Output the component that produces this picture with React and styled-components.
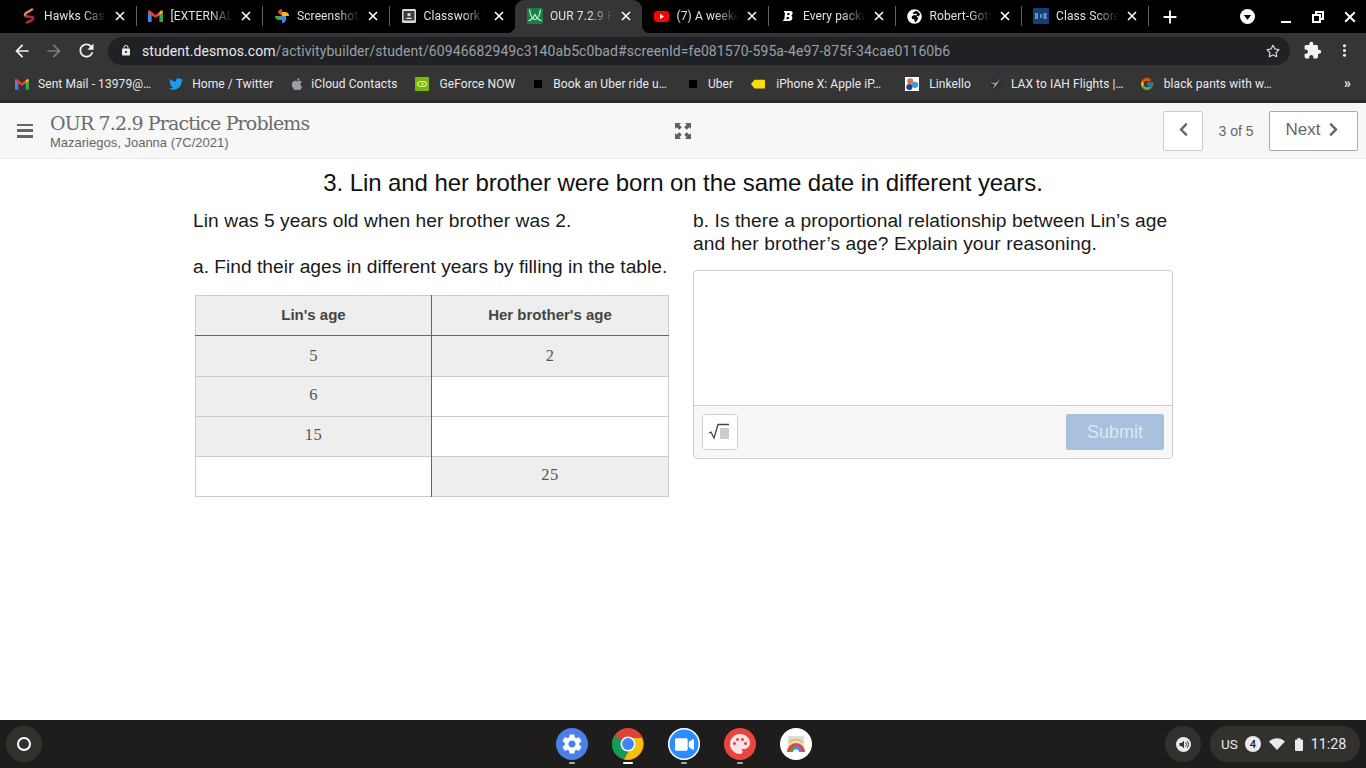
import React from 'react';
import styled, { createGlobalStyle } from 'styled-components';
import { FaApple, FaTwitter, FaChevronLeft, FaChevronRight, FaRegStar, FaVideo, FaGlobeAfrica } from 'react-icons/fa';
import { FcGoogle } from 'react-icons/fc';
import { MdSettings, MdPalette, MdArrowBack, MdArrowForward, MdRefresh, MdLock, MdAdd, MdMoreVert, MdExtension } from 'react-icons/md';

const Global = createGlobalStyle`
  html, body { margin: 0; padding: 0; background: #fff; }
  body { font-family: "Liberation Sans", Arial, sans-serif; }
  * { box-sizing: border-box; }
  #root { width: 1366px; height: 768px; overflow: hidden; }
`;

const Screen = styled.div`
  width: 1366px; height: 768px; display: flex; flex-direction: column; background: #fff; overflow: hidden;
`;

const TabStrip = styled.div`
  height: 33px; background: #000; display: flex; align-items: stretch; padding-left: 9px; font-family: Roboto, sans-serif; flex: none;
`;
const Tab = styled.div`
  width: 126.5px; flex: none; position: relative; display: flex; align-items: center; padding: 0 8px 1px 12px;
  background: ${p => (p.$active ? '#353535' : 'transparent')};
  border-radius: 9px 9px 0 0;
  ${p => p.$active && `
    &::before, &::after { content: ''; position: absolute; bottom: 0; width: 8px; height: 8px; }
    &::before { left: -8px; background: radial-gradient(circle at 0 0, #000 8px, #353535 8.5px); }
    &::after { right: -8px; background: radial-gradient(circle at 100% 0, #000 8px, #353535 8.5px); }
  `}
  ${p => p.$sep && `
    &::before { content: ''; position: absolute; left: 0; top: 6px; bottom: 7px; width: 1px; background: #5f6368; }
  `}
`;
const TabEnd = styled.span`
  width: 1px; flex: none; margin: 6px 0 7px; background: #5f6368;
`;
const TabIcon = styled.span`
  width: 16px; height: 16px; flex: none; display: flex; align-items: center; justify-content: center; margin-right: 7px;
`;
const TabTitle = styled.span`
  flex: 1; min-width: 0; overflow: hidden; white-space: nowrap; color: #dee1e6; font-size: 12px; letter-spacing: .1px;
  -webkit-mask-image: linear-gradient(to right, #000 62%, transparent 100%);
  mask-image: linear-gradient(to right, #000 62%, transparent 100%);
`;
const TabClose = styled.span`
  flex: none; width: 16px; display: flex; justify-content: center; color: #fff; margin-left: 5px;
`;
const NewTab = styled.span`
  width: 42px; flex: none; display: flex; align-items: center; justify-content: center; color: #fff;
`;
const WindowControls = styled.div`
  margin-left: auto; display: flex; align-items: center; color: #fff;
`;
const WinButton = styled.span`
  width: ${p => p.$w || 32}px; height: 33px; display: flex; align-items: center; justify-content: center;
`;

const Toolbar = styled.div`
  height: 35px; background: #353535; display: flex; align-items: center; flex: none; padding-left: 6px; color: #fff; font-family: Roboto, sans-serif;
`;
const NavButton = styled.span`
  width: 32px; height: 32px; flex: none; display: flex; align-items: center; justify-content: center;
  color: ${p => (p.$off ? '#7b7c7f' : '#f1f3f4')};
`;
const UrlBar = styled.div`
  margin-left: 6px; width: 1182px; height: 28px; border-radius: 14px; background: #202124; display: flex; align-items: center; padding: 0 10px 0 12px; flex: none;
`;
const LockIcon = styled.span`
  width: 12px; display: flex; justify-content: center; margin-right: 10px; color: #e8eaed;
`;
const UrlText = styled.span`
  font-size: 14px; color: #9aa0a6; white-space: nowrap; letter-spacing: .08px;
  b { font-weight: 400; color: #e8eaed; }
`;
const UrlStar = styled.span`
  margin-left: auto; display: flex; color: #dadce0;
`;
const ToolIcons = styled.div`
  display: flex; align-items: center; margin-left: 6px;
`;

const BookmarkBar = styled.div`
  height: 32px; background: #353535; display: flex; align-items: center; padding-left: 15px; flex: none; gap: 18px; font-family: Roboto, sans-serif; position: relative;
`;
const Bookmark = styled.span`
  display: flex; align-items: center; gap: ${p => p.$gap}px; margin-left: ${p => p.$ml}px; font-size: 12px; color: #e8eaed; white-space: nowrap; letter-spacing: .08px;
`;
const BmIcon = styled.span`
  width: 14px; height: 16px; display: flex; align-items: center; justify-content: center; flex: none;
`;
const More = styled.span`
  position: absolute; right: 16px; top: 7px; color: #e8eaed; font-size: 14px; font-weight: 700; letter-spacing: -1px;
`;
const Square = styled.span`
  width: 8px; height: 8px; background: #000; display: block;
`;
const DarkLine = styled.div`
  height: 3px; background: #2a2a2a; flex: none;
`;

const Header = styled.header`
  height: 56px; flex: none; background: #f7f7f7; border-bottom: 1px solid #e8e8e8; display: flex; align-items: center; padding: 0 8px 0 17px; position: relative;
`;
const Burger = styled.span`
  width: 16px; height: 14px; flex: none; display: flex; flex-direction: column; justify-content: space-between;
  i { display: block; height: 2.6px; background: #666; }
`;
const TitleBlock = styled.div`
  margin-left: 17px; display: flex; flex-direction: column;
`;
const ActivityTitle = styled.div`
  font-family: "DejaVu Serif", serif; font-size: 19px; color: #6b6b6b; line-height: 23px; margin-top: 1px; letter-spacing: -.85px; white-space: nowrap;
`;
const Student = styled.div`
  font-size: 13px; color: #666; line-height: 16px; white-space: nowrap;
`;
const Expand = styled.span`
  position: absolute; left: 675px; top: 20px; width: 16px; height: 16px;
`;
const Pager = styled.div`
  margin-left: auto; display: flex; align-items: center;
`;
const PagerBtn = styled.span`
  height: 40px; border: 1px solid ${p => (p.$strong ? '#aaa' : '#ccc')}; border-radius: 2px; background: #fff; display: flex; align-items: center; justify-content: center;
  color: #666; font-size: 17px; width: ${p => p.$w}px; gap: 6px; padding-bottom: 2px;
`;
const PagerLabel = styled.span`
  font-size: 14px; color: #666; width: 66px; text-align: center; padding-top: 1px;
`;

const Main = styled.main`
  flex: 1; display: flex; flex-direction: column; align-items: center; padding-top: 9px; color: #000;
`;
const Heading = styled.h1`
  margin: 0; font-size: 24px; font-weight: 400; line-height: 30px; text-align: center; color: #111; white-space: nowrap; letter-spacing: -.085px;
`;
const Columns = styled.div`
  width: 980px; margin-top: 11px; display: grid; grid-template-columns: 476px 480px; column-gap: 24px;
`;
const Para = styled.p`
  margin: 0 0 ${p => p.$mb || 0}px; font-size: 19.2px; line-height: 23px; color: #1a1a1a; white-space: nowrap; letter-spacing: ${p => p.$ls || 0}px;
`;
const AgeTable = styled.table`
  margin: 17px 0 0 2px; width: 474px; border-collapse: collapse; table-layout: fixed; border: 1px solid #ccc;
`;
const Th = styled.th`
  height: 40px; background: #eee; color: #444; font-weight: 700; font-size: 15px; text-align: center; padding: 0 0 2px;
  width: ${p => (p.$w ? `${p.$w}px` : 'auto')};
  border-bottom: 1px solid #666; border-left: ${p => (p.$split ? '1px solid #666' : '0')};
`;
const Td = styled.td`
  height: ${p => p.$h || 40}px; padding: 0 0 ${p => p.$pb}px; text-align: center; font-family: "Liberation Serif", serif; font-size: 16.5px; letter-spacing: .5px; color: #555;
  background: ${p => (p.$given ? '#eee' : '#fff')};
  border-top: 1px solid #ccc; border-left: ${p => (p.$split ? '1px solid #666' : '0')};
`;
const AnswerBox = styled.div`
  margin-top: 15px; width: 480px; height: 189px; border: 1px solid #ccc; border-radius: 4px; overflow: hidden; display: flex; flex-direction: column; background: #fff;
`;
const AnswerArea = styled.div`
  flex: 1;
`;
const AnswerFooter = styled.div`
  height: 53px; flex: none; background: #f7f7f7; border-top: 1px solid #ccc; display: flex; align-items: center; justify-content: space-between; padding: 0 8px;
`;
const MathBtn = styled.span`
  width: 36px; height: 36px; border: 1px solid #ccc; border-radius: 4px; background: #fff; display: flex; align-items: center; justify-content: center;
`;
const Submit = styled.span`
  width: 98px; height: 36px; border-radius: 2px; background: #a9c1dc; color: #dfe8f2; display: flex; align-items: center; justify-content: center; font-size: 18px;
`;

const Shelf = styled.footer`
  height: 48px; flex: none; background: #1e1d1b; display: grid; grid-template-columns: 1fr auto 1fr; align-items: center; font-family: Roboto, sans-serif; color: #e8eaed;
`;
const Launcher = styled.span`
  margin-left: 6px; width: 36px; height: 36px; border-radius: 50%; background: #32312e; display: flex; align-items: center; justify-content: center;
  i { display: block; width: 14px; height: 14px; border: 2px solid #fff; border-radius: 50%; }
`;
const Apps = styled.div`
  display: flex; gap: 24px; margin-left: 2px;
`;
const AppIcon = styled.span`
  width: 32px; height: 32px; border-radius: 50%; position: relative; display: flex; align-items: center; justify-content: center;
  background: ${p => p.$bg};
  box-shadow: ${p => (p.$ring ? '0 0 0 1.5px #fff inset' : 'none')};
  ${p => p.$dot && `
    &::after { content: ''; position: absolute; left: 50%; bottom: -4px; height: 2px; border-radius: 1px;
      width: ${p.$dot === 'on' ? 10 : 6}px; margin-left: ${p.$dot === 'on' ? -5 : -3}px;
      background: ${p.$dot === 'on' ? '#fff' : '#aaa'}; }
  `}
`;
const Tray = styled.div`
  display: flex; justify-content: flex-end; align-items: center; gap: 9px; padding-right: 6px;
`;
const TrayCircle = styled.span`
  width: 36px; height: 36px; border-radius: 50%; background: #32312e; display: flex; align-items: center; justify-content: center;
`;
const Pill = styled.div`
  width: 150px; height: 36px; border-radius: 18px; background: #32312e; display: flex; align-items: center; padding-left: 11px; font-size: 13.5px; color: #e8eaed;
`;
const Badge = styled.span`
  margin-left: 7px; width: 16px; height: 16px; border-radius: 50%; background: #e8eaed; color: #222; font-size: 11px; display: flex; align-items: center; justify-content: center; font-weight: 500;
`;
const Clock = styled.span`
  margin-left: 8px; font-size: 14.3px;
`;
const TrayGlyph = styled.svg`
  margin-left: ${p => p.$ml}px; flex: none;
`;

const CloseGlyph = ({ size = 10 }) => (
  <svg width={size} height={size} viewBox="0 0 10 10"><path d="M1 1l8 8M9 1l-8 8" stroke="#fff" strokeWidth="1.600" /></svg>
);
const GmailIcon = () => (
  <svg width="15" height="12" viewBox="0 0 15 12">
    <path d="M0 2v9a1 1 0 0 0 1 1h2.400V5.200L7.500 8l0-3L2 .6C1 0 0 .6 0 2z" fill="#ea4335" />
    <path d="M0 2v9a1 1 0 0 0 1 1h2.400V5.200z" fill="#4285f4" />
    <path d="M15 2v9a1 1 0 0 1-1 1h-2.400V5.200L7.500 8V5L13 .6c1-.6 2 0 2 1.400z" fill="#ea4335" />
    <path d="M15 2v9a1 1 0 0 1-1 1h-2.400V5.200z" fill="#34a853" />
    <path d="M13 .6 15 2l-3.400 3.200V2.400z" fill="#fbbc04" />
  </svg>
);
const HawksIcon = () => (
  <svg width="14" height="16" viewBox="0 0 14 16" fill="none">
    <path d="M10 1.500 4 5c-1.500 1-1.200 2.500 0 3" stroke="#e8864a" strokeWidth="2.600" strokeLinecap="round" />
    <path d="M4 8.500 10 9c1.500.8 1.200 2.200 0 3l-5 2.500" stroke="#b02a3a" strokeWidth="2.600" strokeLinecap="round" />
  </svg>
);
const PhotosIcon = () => (
  <svg width="16" height="16" viewBox="0 0 16 16">
    <path d="M8 8V1a4 4 0 0 0-4 3.500z" fill="#ea4335" />
    <path d="M8 8h7a4 4 0 0 0-3.500-4H8z" fill="#fbbc04" />
    <path d="M8 8v7a4 4 0 0 0 4-3.500V8z" fill="#4285f4" />
    <path d="M8 8H1a4 4 0 0 0 3.500 4H8z" fill="#34a853" />
  </svg>
);
const ClassroomIcon = () => (
  <svg width="14" height="14" viewBox="0 0 14 14">
    <rect width="14" height="14" rx="1.500" fill="#dadce0" />
    <rect x="1.500" y="2" width="11" height="9.500" fill="#3c4043" />
    <circle cx="7" cy="5.600" r="1.700" fill="#dadce0" />
    <path d="M3.800 10c.4-2 6-2 6.400 0z" fill="#dadce0" />
  </svg>
);
const DesmosIcon = () => (
  <svg width="16" height="16" viewBox="0 0 16 16">
    <rect width="16" height="16" rx="2" fill="#1b7f45" />
    <path d="M2.500 1.500C3.500 8 5.500 11.500 8 11.500s4.500-3.500 5.500-10M1.500 12.500c3 0 5-3 6.500-6 1.500 3 3.500 6 6.500 6" stroke="#d6f2e2" strokeWidth="1.200" fill="none" />
  </svg>
);
const YouTubeIcon = () => (
  <svg width="15" height="11" viewBox="0 0 15 11">
    <rect width="15" height="11" rx="3" fill="#f00" />
    <path d="M6 3l4 2.500L6 8z" fill="#fff" />
  </svg>
);
const BoldB = () => (
  <svg width="10" height="10" viewBox="0 0 10 10">
    <path d="M1 0h6c2 0 3 1 2.600 2.600C9.400 3.800 8.600 4.500 8 4.800c1 .3 1.600 1.200 1.300 2.500C9 9 7.800 10 6 10H0l.6-1.500h.7L2 1.500h-1zM4.500 2l-.4 2h1.500c.7 0 1-.4 1-1s-.3-1-1-1zM3.800 6l-.4 2.200h1.700c.7 0 1.100-.5 1.100-1.200S5.800 6 5.200 6z" fill="#fff" fillRule="evenodd" />
  </svg>
);
const SisIcon = () => (
  <svg width="16" height="16" viewBox="0 0 16 16">
    <rect width="16" height="16" rx="1" fill="#123f78" />
    <path d="M2 6h3M2 8h3M2 10h3M8 6v4M10.500 6h3M10.500 8h3M10.500 10h3" stroke="#cfe0f5" strokeWidth="1" />
  </svg>
);
const TagIcon = () => (
  <svg width="16" height="10" viewBox="0 0 16 10">
    <path d="M4 0h11a1 1 0 0 1 1 1v8a1 1 0 0 1-1 1H4L0 5z" fill="#f5dd0a" />
  </svg>
);
const LinkelloIcon = () => (
  <svg width="16" height="16" viewBox="0 0 16 16">
    <rect width="16" height="16" fill="#fff" />
    <circle cx="6" cy="5" r="3.500" fill="#e0704a" />
    <circle cx="11.500" cy="9" r="3.500" fill="#3a9bdc" />
    <circle cx="5" cy="11.500" r="3.500" fill="#1d3f8f" />
  </svg>
);
const PlaneIcon = () => (
  <svg width="16" height="16" viewBox="0 0 16 16">
    <circle cx="8" cy="8" r="7.500" fill="#2b2f45" />
    <path d="M14 2 9 7 2 6l6 2.500L5 14l4.500-5z" fill="#f0b93a" />
  </svg>
);
const NvidiaIcon = () => (
  <svg width="14" height="14" viewBox="0 0 14 14">
    <rect width="14" height="14" fill="#76b900" />
    <ellipse cx="7" cy="7" rx="4.500" ry="2.500" fill="none" stroke="#e6f5c8" strokeWidth="1.200" />
    <circle cx="7.500" cy="7" r="1" fill="#e6f5c8" />
  </svg>
);
const ExpandIcon = () => (
  <svg width="16" height="16" viewBox="0 0 16 16" fill="#5f5f5f">
    <path d="M0 0h6L4.300 1.700 6.800 4.200 4.200 6.800 1.700 4.300 0 6zM16 0v6l-1.700-1.700L11.800 6.800 9.200 4.200l2.500-2.500L10 0zM0 16v-6l1.700 1.700 2.500-2.500 2.600 2.600-2.500 2.500L6 16zM16 16h-6l1.700-1.700-2.500-2.500 2.600-2.600 2.500 2.500L16 10z" />
  </svg>
);
const RootIcon = () => (
  <svg width="24" height="18" viewBox="0 0 24 18">
    <path d="M1 10l2-1 3 6L10 1.500h11" fill="none" stroke="#444" strokeWidth="1.300" />
    <rect x="12" y="5" width="9" height="11" fill="#ccc" />
  </svg>
);
const ChromeLogo = () => (
  <svg width="32" height="32" viewBox="0 0 32 32">
    <circle cx="16" cy="16" r="16" fill="#db4437" />
    <path d="M16 16 2.100 8A16 16 0 0 0 12 31.500L20 16z" fill="#0f9d58" />
    <path d="M16 10h14a16 16 0 0 1-18 21.500L20 18z" fill="#f4c20d" />
    <circle cx="16" cy="16" r="7.500" fill="#fff" />
    <circle cx="16" cy="16" r="6" fill="#4285f4" />
  </svg>
);
const RainbowApp = () => (
  <svg width="24" height="22" viewBox="0 0 24 22">
    <path d="M4 3h16v15H4z" fill="#dadce0" />
    <path d="M3 19a9 9 0 0 1 18 0h-3.500a5.500 5.500 0 0 0-11 0z" fill="#ea4335" />
    <path d="M6 19a6 6 0 0 1 6-6v3a3 3 0 0 0-3 3z" fill="#34a853" />
    <path d="M12 13a6 6 0 0 1 6 6h-3a3 3 0 0 0-3-3z" fill="#4285f4" />
    <path d="M5 9a9 9 0 0 1 14 0l-1 1a8 8 0 0 0-12 0z" fill="#fbbc04" />
  </svg>
);
const SpeakerDisc = () => (
  <svg width="15" height="15" viewBox="0 0 15 15">
    <circle cx="7.500" cy="7.500" r="7.500" fill="#e8eaed" />
    <path d="M3.500 6v3h2l2.500 2.200V3.800L5.500 6z" fill="#32312e" />
    <path d="M9.500 5.500a2.800 2.800 0 0 1 0 4M11 4a5 5 0 0 1 0 7" stroke="#32312e" strokeWidth="1" fill="none" />
  </svg>
);

const tabs = [
  { t: 'Hawks Cas', i: <HawksIcon /> },
  { t: '[EXTERNAL', i: <GmailIcon /> },
  { t: 'Screenshot', i: <PhotosIcon /> },
  { t: 'Classwork f', i: <ClassroomIcon /> },
  { t: 'OUR 7.2.9 F', i: <DesmosIcon />, active: true },
  { t: '(7) A weeke', i: <YouTubeIcon /> },
  { t: 'Every packa', i: <BoldB /> },
  { t: 'Robert-Gott', i: <FaGlobeAfrica size={15} color="#fff" /> },
  { t: 'Class Score', i: <SisIcon /> },
];
const bookmarks = [
  { t: 'Sent Mail - 13979@…', i: <GmailIcon />, gap: 9, ml: 0 },
  { t: 'Home / Twitter', i: <FaTwitter size={14} color="#1d9bf0" />, gap: 9, ml: 0 },
  { t: 'iCloud Contacts', i: <FaApple size={14} color="#9aa0a6" />, gap: 7, ml: -1 },
  { t: 'GeForce NOW', i: <NvidiaIcon />, gap: 10, ml: 0 },
  { t: 'Book an Uber ride u…', i: <Square />, gap: 8, ml: -2 },
  { t: 'Uber', i: <Square />, gap: 8, ml: 1 },
  { t: 'iPhone X: Apple iP…', i: <TagIcon />, gap: 11, ml: 0 },
  { t: 'Linkello', i: <LinkelloIcon />, gap: 10, ml: 6 },
  { t: 'LAX to IAH Flights |…', i: <PlaneIcon />, gap: 9, ml: -1 },
  { t: 'black pants with w…', i: <FcGoogle size={16} />, gap: 10, ml: -2 },
];
const rows = [
  ['5', true, '2', true, 41, 0],
  ['6', true, '', false, 40, 4],
  ['15', true, '', false, 40, 4],
  ['', false, '25', true, 40, 4],
];

export default function App() {
  return (
    <Screen>
      <Global />
      <TabStrip>
        {tabs.map((tab, i) => (
          <Tab key={tab.t} $active={tab.active} $sep={i > 0 && !tab.active && !tabs[i - 1].active}>
            <TabIcon>{tab.i}</TabIcon>
            <TabTitle>{tab.t}</TabTitle>
            <TabClose><CloseGlyph /></TabClose>
          </Tab>
        ))}
        <TabEnd />
        <NewTab><MdAdd size={22} /></NewTab>
        <WindowControls>
          <WinButton $w={46}>
            <svg width="15" height="15" viewBox="0 0 16 16"><circle cx="8" cy="8" r="8" fill="#fff" /><path d="M4 6.500h8L8 11.500z" fill="#000" /></svg>
          </WinButton>
          <WinButton>
            <svg width="12" height="12" viewBox="0 0 12 12"><rect x="1" y="10" width="10" height="2" fill="#fff" /></svg>
          </WinButton>
          <WinButton>
            <svg width="12" height="12" viewBox="0 0 12 12"><path d="M3 0h9v9h-3v3H0V3h3zM5 2v1h4v4h1V2zM2 5v5h5V5z" fill="#fff" fillRule="evenodd" /></svg>
          </WinButton>
          <WinButton><CloseGlyph size={12} /></WinButton>
        </WindowControls>
      </TabStrip>
      <Toolbar>
        <NavButton><MdArrowBack size={20} /></NavButton>
        <NavButton $off><MdArrowForward size={20} /></NavButton>
        <NavButton><MdRefresh size={21} /></NavButton>
        <UrlBar>
          <LockIcon><MdLock size={13} /></LockIcon>
          <UrlText><b>student.desmos.com</b>/activitybuilder/student/60946682949c3140ab5c0bad#screenId=fe081570-595a-4e97-875f-34cae01160b6</UrlText>
          <UrlStar><FaRegStar size={14} /></UrlStar>
        </UrlBar>
        <ToolIcons>
          <NavButton><MdExtension size={19} /></NavButton>
          <NavButton><MdMoreVert size={19} /></NavButton>
        </ToolIcons>
      </Toolbar>
      <BookmarkBar>
        {bookmarks.map(b => (
          <Bookmark key={b.t} $gap={b.gap} $ml={b.ml}>
            <BmIcon>{b.i}</BmIcon>
            {b.t}
          </Bookmark>
        ))}
        <More>»</More>
      </BookmarkBar>
      <DarkLine />
      <Header>
        <Burger><i /><i /><i /></Burger>
        <TitleBlock>
          <ActivityTitle>OUR 7.2.9 Practice Problems</ActivityTitle>
          <Student>Mazariegos, Joanna (7C/2021)</Student>
        </TitleBlock>
        <Expand><ExpandIcon /></Expand>
        <Pager>
          <PagerBtn $w={40}><FaChevronLeft size={15} /></PagerBtn>
          <PagerLabel>3 of 5</PagerLabel>
          <PagerBtn $w={89} $strong>Next <FaChevronRight size={15} /></PagerBtn>
        </Pager>
      </Header>
      <Main>
        <Heading>3. Lin and her brother were born on the same date in different years.</Heading>
        <Columns>
          <div>
            <Para $mb={23} $ls={0.07}>Lin was 5 years old when her brother was 2.</Para>
            <Para>a. Find their ages in different years by filling in the table.</Para>
            <AgeTable>
              <thead>
                <tr><Th $w={236}>Lin's age</Th><Th $split>Her brother's age</Th></tr>
              </thead>
              <tbody>
                {rows.map((r, i) => (
                  <tr key={i}>
                    <Td $given={r[1]} $h={r[4]} $pb={r[5]}>{r[0]}</Td>
                    <Td $given={r[3]} $h={r[4]} $pb={r[5]} $split>{r[2]}</Td>
                  </tr>
                ))}
              </tbody>
            </AgeTable>
          </div>
          <div>
            <Para $ls={0.055}>b. Is there a proportional relationship between Lin’s age</Para>
            <Para $ls={0.1}>and her brother’s age? Explain your reasoning.</Para>
            <AnswerBox>
              <AnswerArea />
              <AnswerFooter>
                <MathBtn><RootIcon /></MathBtn>
                <Submit>Submit</Submit>
              </AnswerFooter>
            </AnswerBox>
          </div>
        </Columns>
      </Main>
      <Shelf>
        <div><Launcher><i /></Launcher></div>
        <Apps>
          <AppIcon $bg="#4a80e8" $dot="off"><MdSettings size={24} color="#fff" /></AppIcon>
          <AppIcon $bg="transparent" $dot="on"><ChromeLogo /></AppIcon>
          <AppIcon $bg="#2d8cff" $ring $dot="off"><FaVideo size={19} color="#fff" /></AppIcon>
          <AppIcon $bg="#e8453c" $dot="off"><MdPalette size={24} color="#fbe4e4" /></AppIcon>
          <AppIcon $bg="#fff"><RainbowApp /></AppIcon>
        </Apps>
        <Tray>
          <TrayCircle><SpeakerDisc /></TrayCircle>
          <Pill>
            US
            <Badge>4</Badge>
            <TrayGlyph $ml={8} width="16" height="12" viewBox="0 0 16 12"><path d="M0 3.500C4.500-1 11.500-1 16 3.500L8 12z" fill="#e8eaed" /></TrayGlyph>
            <TrayGlyph $ml={10} width="8" height="13" viewBox="0 0 8 13"><path d="M2.500 0h3v1.500H7a1 1 0 0 1 1 1V12a1 1 0 0 1-1 1H1a1 1 0 0 1-1-1V2.500a1 1 0 0 1 1-1h1.500z" fill="#e8eaed" /></TrayGlyph>
            <Clock>11:28</Clock>
          </Pill>
        </Tray>
      </Shelf>
    </Screen>
  );
}
